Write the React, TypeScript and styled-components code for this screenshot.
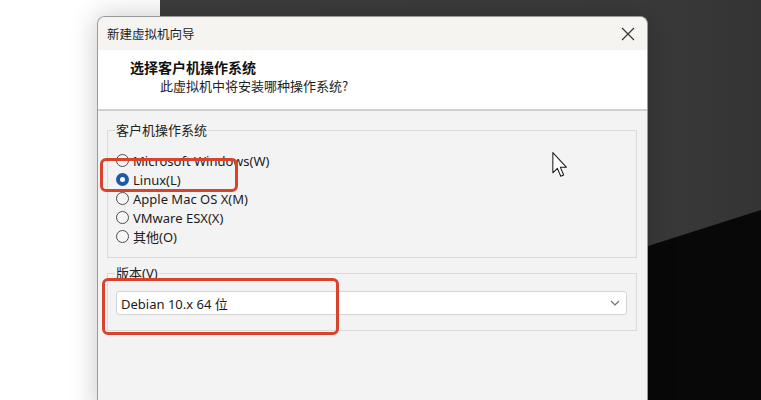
import React from 'react';
import styled, { createGlobalStyle } from 'styled-components';

const GlobalStyle = createGlobalStyle`
    html, body {
        margin: 0;
        padding: 0;
        background: #ffffff;
        overflow: hidden;
    }
`;

const uiFont = `"Noto Sans", "Noto Sans CJK SC", sans-serif`;

const Desktop = styled.div`
    position: relative;
    width: 761px;
    height: 400px;
    overflow: hidden;
    background: #ffffff;
    font-family: ${uiFont};
    color: #1b1b1b;
`;

// dark window sitting behind the dialog
const BackWindow = styled.div`
    position: absolute;
    left: 160px;
    top: 0;
    right: 0;
    bottom: 0;
    background: linear-gradient(90deg, #3d3d3d 0%, #3a3a3a 80%, #343434 100%);

    &::after {
        content: '';
        position: absolute;
        inset: 0;
        background: #080808;
        clip-path: polygon(300px 306px, 100% 210px, 100% 100%, 300px 100%);
    }
`;

const Dialog = styled.div`
    position: relative;
    margin: 16px 0 0 97px;
    width: 551px;
    height: 400px;
    box-sizing: border-box;
    border: 1px solid #9a9a9a;
    border-bottom: none;
    border-radius: 8px 8px 0 0;
    background: #f3f3f3;
    box-shadow: 0 0 28px rgba(0, 0, 0, 0.22);
    overflow: hidden;
    display: flex;
    flex-direction: column;
`;

const TitleBar = styled.div`
    height: 33px;
    flex: none;
    display: flex;
    align-items: center;
    justify-content: space-between;
    padding: 0 8px 0 9px;
    background: #f6f4f1;
`;

const TitleText = styled.span`
    font-size: 12.5px;
    font-family: "Noto Sans CJK SC", sans-serif;
    color: #1e1e1e;
`;

const CloseButton = styled.button`
    width: 22px;
    height: 22px;
    padding: 0;
    border: none;
    background: transparent;
    display: flex;
    align-items: center;
    justify-content: center;
    color: #303030;
`;

const Header = styled.div`
    height: 61px;
    flex: none;
    box-sizing: border-box;
    padding: 7px 0 0 32px;
    background: #ffffff;
    border-bottom: 2px solid #cfcfcf;
`;

const HeaderTitle = styled.div`
    font-family: "Noto Sans CJK SC", sans-serif;
    font-size: 14px;
    font-weight: 700;
    line-height: 20px;
    color: #111;
`;

const HeaderSub = styled.div`
    font-family: "Noto Sans CJK SC", sans-serif;
    font-size: 13px;
    line-height: 18px;
    margin-left: 30px;
    color: #222;
`;

const Body = styled.div`
    flex: 1;
    padding: 0 10px 0 9px;
    display: flex;
    flex-direction: column;
`;

const Group = styled.fieldset<{ $top: number }>`
    margin: ${({ $top }) => $top}px 0 0 0;
    padding: 0 0 0 8px;
    border: 1px solid #dadada;
    min-width: 0;
`;

const Legend = styled.legend`
    font-size: 13px;
    line-height: 18px;
    padding: 0 1px;
    margin-left: -1px;
    color: #222;
`;

const RadioList = styled.div`
    display: flex;
    flex-direction: column;
    padding: 12px 0 11px;
`;

const RadioRow = styled.label`
    display: flex;
    align-items: center;
    gap: 4px;
    height: 19px;
    font-size: 13px;
    color: #1b1b1b;
`;

const RadioDot = styled.span<{ $checked?: boolean }>`
    width: 13px;
    height: 13px;
    box-sizing: border-box;
    border-radius: 50%;
    flex: none;
    border: ${({ $checked }) => ($checked ? '4px solid #1a5aa6' : '1px solid #4d4d4d')};
    background: ${({ $checked }) => ($checked ? '#ffffff' : '#f6f6f6')};
`;

const SelectWrap = styled.div`
    padding: 9px 9px 15px 0;
`;

const Select = styled.div`
    height: 24px;
    box-sizing: border-box;
    display: flex;
    align-items: center;
    justify-content: space-between;
    padding: 0 6px 0 4px;
    background: #ffffff;
    border: 1px solid #d4d4d4;
    border-radius: 3px;
    font-size: 13px;
    color: #1b1b1b;
`;

const Mark = styled.div<{ $x: number; $y: number; $w: number; $h: number }>`
    position: absolute;
    left: ${({ $x }) => $x}px;
    top: ${({ $y }) => $y}px;
    width: ${({ $w }) => $w}px;
    height: ${({ $h }) => $h}px;
    box-sizing: border-box;
    border: 3px solid #d8432e;
    border-radius: 6px;
    pointer-events: none;
`;

const Cursor = styled.svg`
    position: absolute;
    left: 552px;
    top: 152px;
`;

const systems = [
    { label: 'Microsoft Windows(W)', checked: false },
    { label: 'Linux(L)', checked: true },
    { label: 'Apple Mac OS X(M)', checked: false },
    { label: 'VMware ESX(X)', checked: false },
    { label: '其他(O)', checked: false },
];

const App: React.FC = () => {
    return (
        <Desktop>
            <GlobalStyle />
            <BackWindow />
            <Dialog>
                <TitleBar>
                    <TitleText>新建虚拟机向导</TitleText>
                    <CloseButton aria-label="关闭">
                        <svg width="14" height="14" viewBox="0 0 14 14">
                            <path d="M1 1 L13 13 M13 1 L1 13" stroke="currentColor" strokeWidth="1.1" fill="none" />
                        </svg>
                    </CloseButton>
                </TitleBar>
                <Header>
                    <HeaderTitle>选择客户机操作系统</HeaderTitle>
                    <HeaderSub>此虚拟机中将安装哪种操作系统?</HeaderSub>
                </Header>
                <Body>
                    <Group $top={10}>
                        <Legend>客户机操作系统</Legend>
                        <RadioList>
                            {systems.map((s) => (
                                <RadioRow key={s.label}>
                                    <RadioDot $checked={s.checked} />
                                    {s.label}
                                </RadioRow>
                            ))}
                        </RadioList>
                    </Group>
                    <Group $top={6}>
                        <Legend>版本(V)</Legend>
                        <SelectWrap>
                            <Select>
                                <span>Debian 10.x 64 位</span>
                                <svg width="10" height="6" viewBox="0 0 10 6">
                                    <path d="M1 1 L5 5 L9 1" stroke="#707070" strokeWidth="1.2" fill="none" />
                                </svg>
                            </Select>
                        </SelectWrap>
                    </Group>
                </Body>
            </Dialog>
            <Mark $x={100} $y={158} $w={138} $h={34} />
            <Mark $x={102} $y={278} $w={237} $h={57} />
            <Cursor width="16" height="26" viewBox="0 0 12 20">
                <path
                    d="M0.5 0.5 L0.5 16 L4 12.6 L6.6 18.6 L8.8 17.7 L6.3 11.8 L11 11.8 Z"
                    fill="#ffffff"
                    stroke="#1a1a1a"
                    strokeWidth="0.8"
                    strokeLinejoin="round"
                />
            </Cursor>
        </Desktop>
    );
};

export default App;
